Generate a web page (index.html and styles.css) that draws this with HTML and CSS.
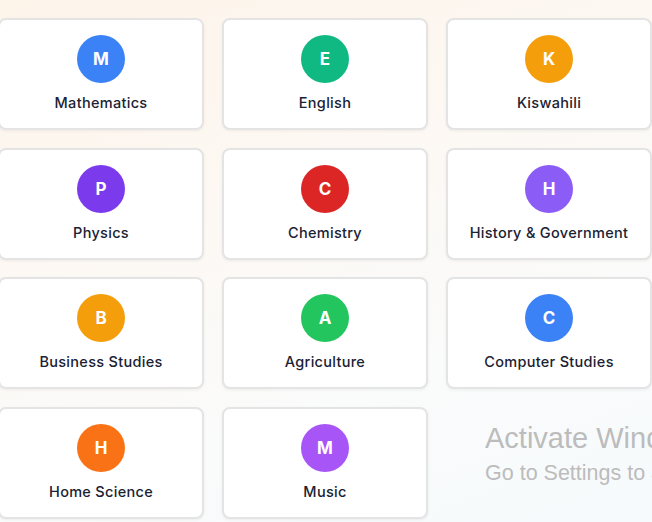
FILE: index.html
```html
<!DOCTYPE html>
<html lang="en">
<head>
<meta charset="utf-8">
<title>Subjects</title>
<link rel="stylesheet" href="styles.css">
</head>
<body>
<main class="page">
  <div class="grid">
    <div class="card"><div class="badge blue">M</div><div class="label">Mathematics</div></div>
    <div class="card"><div class="badge green">E</div><div class="label">English</div></div>
    <div class="card"><div class="badge amber">K</div><div class="label">Kiswahili</div></div>
    <div class="card"><div class="badge violet">P</div><div class="label">Physics</div></div>
    <div class="card"><div class="badge red">C</div><div class="label">Chemistry</div></div>
    <div class="card"><div class="badge lilac">H</div><div class="label">History &amp; Government</div></div>
    <div class="card"><div class="badge amber">B</div><div class="label">Business Studies</div></div>
    <div class="card"><div class="badge lime">A</div><div class="label">Agriculture</div></div>
    <div class="card"><div class="badge blue">C</div><div class="label">Computer Studies</div></div>
    <div class="card"><div class="badge orange">H</div><div class="label">Home Science</div></div>
    <div class="card"><div class="badge purple">M</div><div class="label">Music</div></div>
  </div>
</main>
<div class="watermark">
  <div class="wm-title">Activate Windows</div>
  <div class="wm-sub">Go to Settings to activate Windows.</div>
</div>
</body>
</html>
```
FILE: styles.css
```css
html, body {
  margin: 0;
  padding: 0;
  height: 100%;
  overflow: hidden;
}
body {
  background: linear-gradient(160deg, #fdf4ea 0%, #fdf8f3 35%, #fafbfb 70%, #f6fafc 100%);
  font-family: Inter, "Open Sans", sans-serif;
}
.page {
  padding-top: 18px;
  margin-left: -2px;
}
.grid {
  display: grid;
  grid-template-columns: repeat(3, 206px);
  column-gap: 18px;
  row-gap: 17.6px;
}
.card {
  box-sizing: border-box;
  height: 112px;
  background: #ffffff;
  border: 2px solid #e4e4e4;
  border-radius: 8px;
  box-shadow: 0 1px 3px rgba(0, 0, 0, 0.06);
  display: flex;
  flex-direction: column;
  align-items: center;
  padding-top: 15px;
}
.badge {
  width: 48px;
  height: 48px;
  border-radius: 50%;
  color: #ffffff;
  font-weight: 700;
  font-size: 17px;
  display: flex;
  align-items: center;
  justify-content: center;
}
.label {
  margin-top: 10px;
  font-size: 14.5px;
  letter-spacing: 0.3px;
  line-height: 20px;
  font-weight: 500;
  color: #1a2233;
}
.blue { background: #3b82f6; }
.green { background: #10b981; }
.amber { background: #f59e0b; }
.violet { background: #7c3aed; }
.red { background: #dc2626; }
.lilac { background: #8b5cf6; }
.lime { background: #22c55e; }
.orange { background: #f97316; }
.purple { background: #a855f7; }
.watermark {
  position: absolute;
  left: 485px;
  top: 420px;
  color: #bcbcbc;
  font-family: "Liberation Sans", Arial, sans-serif;
  white-space: nowrap;
}
.wm-title {
  font-size: 29px;
  line-height: 36px;
}
.wm-sub {
  font-size: 21.5px;
  line-height: 34px;
}
```
